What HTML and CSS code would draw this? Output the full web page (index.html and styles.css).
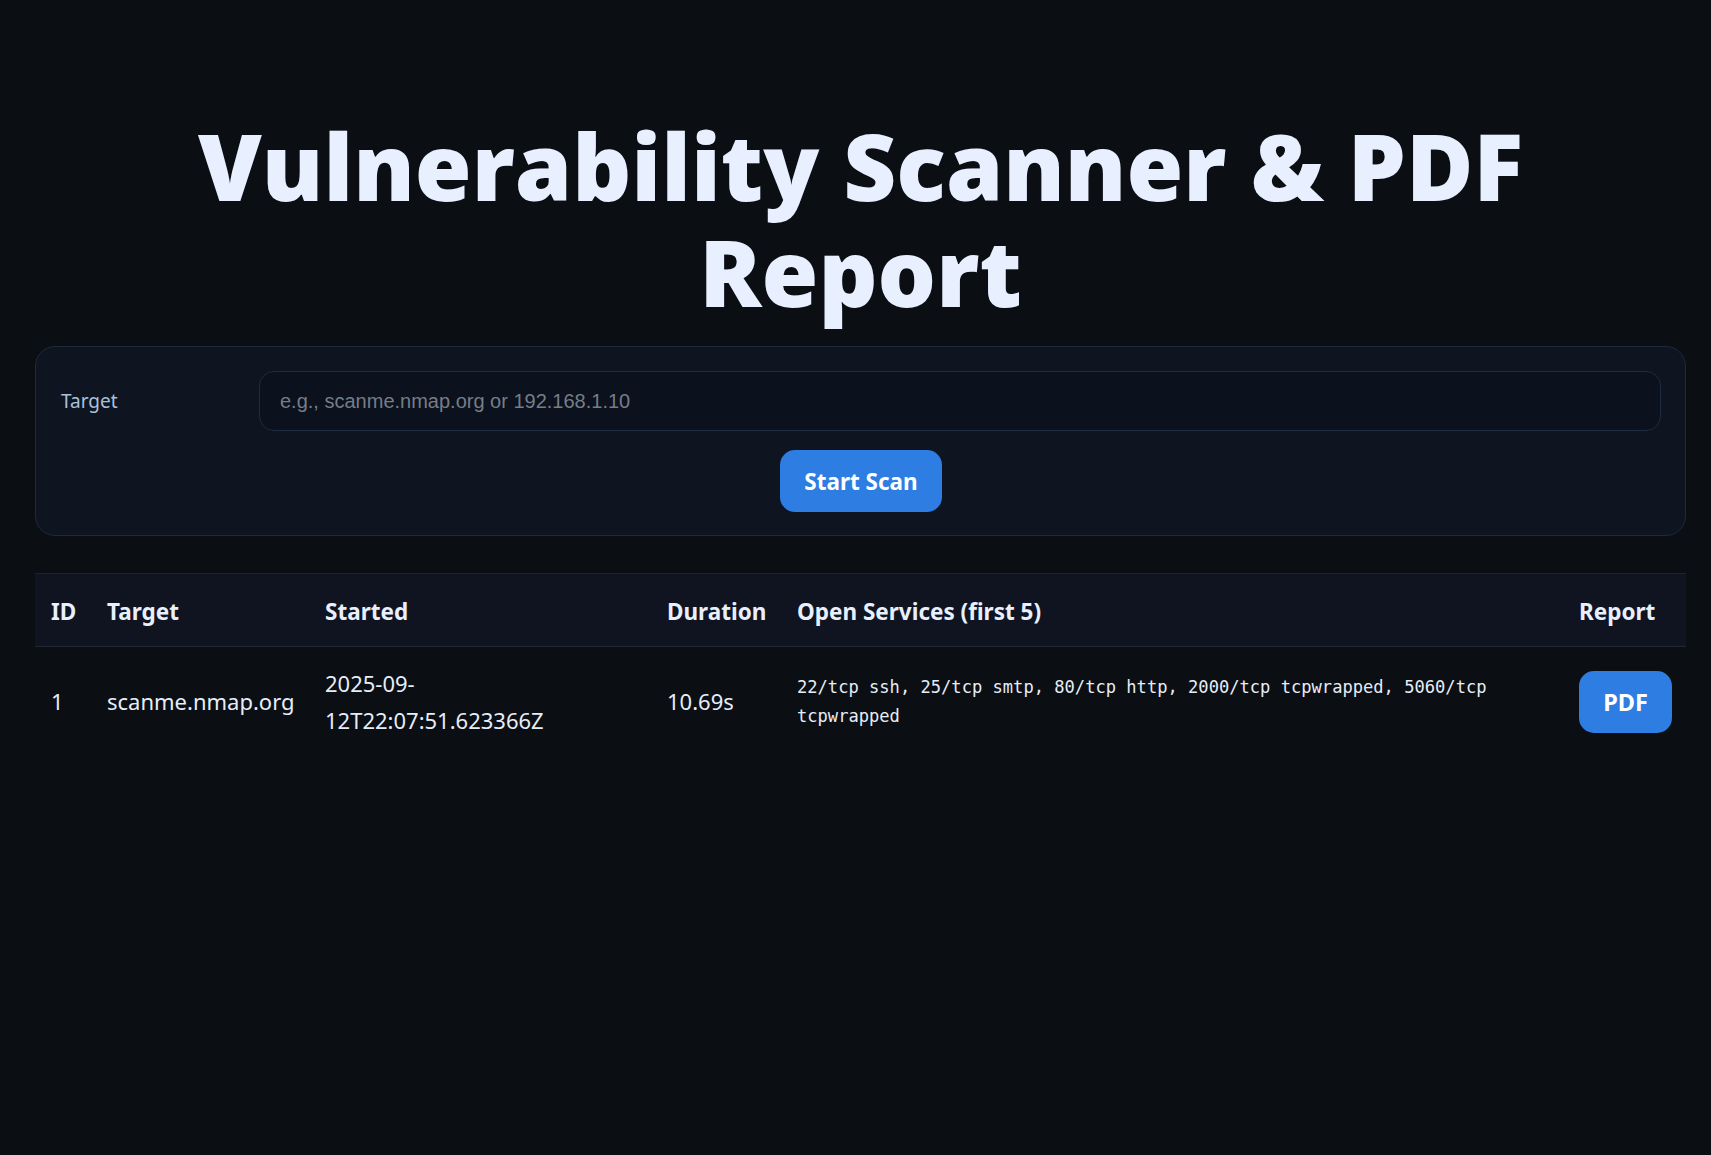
FILE: index.html
```html
<!DOCTYPE html>
<html lang="en">
<head>
<meta charset="utf-8">
<title>Vulnerability Scanner &amp; PDF Report</title>
<link rel="stylesheet" href="styles.css">
</head>
<body>
<main class="page">
  <h1 class="title">Vulnerability Scanner &amp; PDF Report</h1>
  <form class="card">
    <div class="field">
      <label class="label" for="target">Target</label>
      <input class="input" id="target" type="text" placeholder="e.g., scanme.nmap.org or 192.168.1.10" autofocus>
    </div>
    <div class="actions">
      <button type="button" class="btn btn-scan">Start Scan</button>
    </div>
  </form>
  <table class="scans">
    <colgroup>
      <col class="c-id"><col class="c-target"><col class="c-started"><col class="c-dur"><col class="c-svc"><col class="c-rep">
    </colgroup>
    <thead>
      <tr><th>ID</th><th>Target</th><th>Started</th><th>Duration</th><th>Open Services (first 5)</th><th>Report</th></tr>
    </thead>
    <tbody>
      <tr>
        <td>1</td>
        <td>scanme.nmap.org</td>
        <td class="started">2025-09-12T22:07:51.623366Z</td>
        <td>10.69s</td>
        <td class="mono">22/tcp ssh, 25/tcp smtp, 80/tcp http, 2000/tcp tcpwrapped, 5060/tcp tcpwrapped</td>
        <td><button type="button" class="btn btn-pdf">PDF</button></td>
      </tr>
    </tbody>
  </table>
</main>
</body>
</html>
```
FILE: styles.css
```css
html, body {
  margin: 0;
  background: #0b0e13;
  color: #e6edf7;
  font-family: "Noto Sans", "Open Sans", sans-serif;
}
.page {
  padding: 113px 25px 40px 35px;
}
.title {
  margin: 0 0 21px;
  text-align: center;
  font-family: "Open Sans", sans-serif;
  font-weight: 800;
  font-size: 92px;
  line-height: 106px;
  color: #e8f0ff;
}
.card {
  background: #0f1520;
  border: 1px solid #1d2a3c;
  border-radius: 20px;
  padding: 24px 24px 23px 25px;
}
.field {
  display: grid;
  grid-template-columns: 198px 1fr;
  align-items: center;
}
.label {
  font-size: 19px;
  color: #a9c0dc;
}
.input {
  box-sizing: border-box;
  height: 60px;
  background: #0b111d;
  border: 1px solid #1f2c40;
  border-radius: 15px;
  padding: 0 20px;
  font-family: "Liberation Sans", Arial, sans-serif;
  font-size: 20px;
  color: #e6edf7;
  caret-color: #e6edf7;
  outline: none;
}
.input::placeholder {
  color: #767d88;
}
.actions {
  display: flex;
  justify-content: center;
  margin-top: 19px;
}
.btn {
  border: 0;
  background: #2e7de2;
  color: #fff;
  font-family: "Noto Sans", sans-serif;
  font-weight: 700;
  border-radius: 15px;
  cursor: pointer;
  padding: 0;
}
.btn-scan {
  width: 162px;
  height: 62px;
  font-size: 22.5px;
}
.btn-pdf {
  width: 93px;
  height: 62px;
  font-size: 23.5px;
}
.scans {
  margin-top: 37px;
  width: 100%;
  border-collapse: collapse;
  table-layout: fixed;
}
.c-id { width: 56px; }
.c-target { width: 218px; }
.c-started { width: 342px; }
.c-dur { width: 130px; }
.c-svc { width: 782px; }
.c-rep { width: 123px; }
.scans thead tr {
  background: #0f1420;
  border-top: 1px solid #1a2230;
  border-bottom: 1px solid #1e2838;
}
.scans th {
  text-align: left;
  font-weight: 700;
  font-size: 22.5px;
  line-height: 34px;
  padding: 21px 16px 17px;
  color: #e8efff;
  white-space: nowrap;
}
.scans td {
  font-size: 22px;
  line-height: 36.7px;
  padding: 18px 16px;
  vertical-align: middle;
  color: #e6edf7;
}
.scans td.started {
  padding-right: 40px;
}
.scans td.mono {
  font-family: "DejaVu Sans Mono", monospace;
  font-size: 17.1px;
  line-height: 28.3px;
}
```
